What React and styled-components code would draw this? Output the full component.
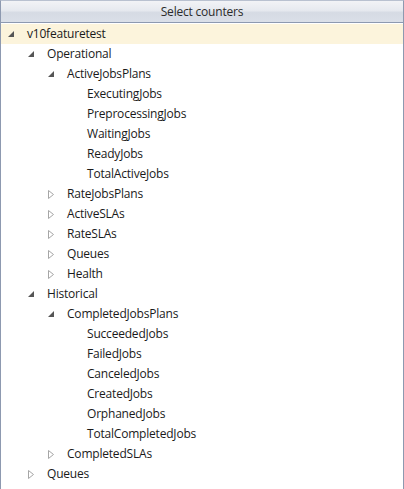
import React from "react"
import styled, { createGlobalStyle } from "styled-components"

const GlobalStyle = createGlobalStyle`
  html, body {
    margin: 0;
    padding: 0;
    background: #ffffff;
  }
  body {
    font-family: "Open Sans", "Noto Sans", sans-serif;
  }
`

const tree = [
  {
    label: "v10featuretest",
    open: true,
    selected: true,
    children: [
      {
        label: "Operational",
        open: true,
        children: [
          {
            label: "ActiveJobsPlans",
            open: true,
            children: [
              { label: "ExecutingJobs" },
              { label: "PreprocessingJobs" },
              { label: "WaitingJobs" },
              { label: "ReadyJobs" },
              { label: "TotalActiveJobs" },
            ],
          },
          { label: "RateJobsPlans", children: [] },
          { label: "ActiveSLAs", children: [] },
          { label: "RateSLAs", children: [] },
          { label: "Queues", children: [] },
          { label: "Health", children: [] },
        ],
      },
      {
        label: "Historical",
        open: true,
        children: [
          {
            label: "CompletedJobsPlans",
            open: true,
            children: [
              { label: "SucceededJobs" },
              { label: "FailedJobs" },
              { label: "CanceledJobs" },
              { label: "CreatedJobs" },
              { label: "OrphanedJobs" },
              { label: "TotalCompletedJobs" },
            ],
          },
          { label: "CompletedSLAs", children: [] },
        ],
      },
      { label: "Queues", children: [] },
    ],
  },
]

const Panel = styled.div`
  width: 404px;
  height: 489px;
  box-sizing: border-box;
  border-left: 1px solid #8d99b0;
  border-right: 1px solid #8d99b0;
  border-top: 1px solid #b9c1d0;
  overflow: hidden;
  display: flex;
  flex-direction: column;
`

const Header = styled.div`
  height: 21px;
  flex-shrink: 0;
  display: flex;
  align-items: center;
  justify-content: center;
  background: linear-gradient(
    to bottom,
    #f2f3f6 0%,
    #e6e9ef 45%,
    #d6dbe4 55%,
    #dadfe8 100%
  );
  border-bottom: 1px solid #8d99b0;
  color: #2b2b2b;
  font-size: 12px;
  letter-spacing: -0.2px;
  line-height: 1;
`

const Tree = styled.div`
  padding-top: 1px;
  display: flex;
  flex-direction: column;
`

const Row = styled.div`
  height: 20px;
  display: flex;
  align-items: center;
  padding-left: ${(p) => 7 + p.$level * 20}px;
  background: ${(p) => (p.$selected ? "#fcf4dc" : "transparent")};
  font-size: 12px;
  letter-spacing: -0.2px;
  color: #1a1a1a;
  white-space: nowrap;
`

const Toggle = styled.span`
  width: 19px;
  height: 20px;
  flex-shrink: 0;
  display: flex;
  align-items: center;
`

const Label = styled.span`
  line-height: 20px;
`

const Expanded = () => (
  <svg width="7" height="7" viewBox="0 0 7 7">
    <polygon points="6,0 6,6 0,6" fill="#555555" />
  </svg>
)

const Collapsed = () => (
  <svg width="6" height="9" viewBox="0 0 6 9">
    <polygon
      points="0.5,0.5 5.5,4.5 0.5,8.5"
      fill="none"
      stroke="#a6a6a6"
      strokeWidth="1"
    />
  </svg>
)

const Node = ({ node, level }) => (
  <>
    <Row $level={level} $selected={node.selected}>
      <Toggle>
        {node.children && (node.open ? <Expanded /> : <Collapsed />)}
      </Toggle>
      <Label>{node.label}</Label>
    </Row>
    {node.open &&
      node.children.map((child, i) => (
        <Node key={i} node={child} level={level + 1} />
      ))}
  </>
)

export default function App() {
  return (
    <>
      <GlobalStyle />
      <Panel>
        <Header>Select counters</Header>
        <Tree>
          {tree.map((n, i) => (
            <Node key={i} node={n} level={0} />
          ))}
        </Tree>
      </Panel>
    </>
  )
}
